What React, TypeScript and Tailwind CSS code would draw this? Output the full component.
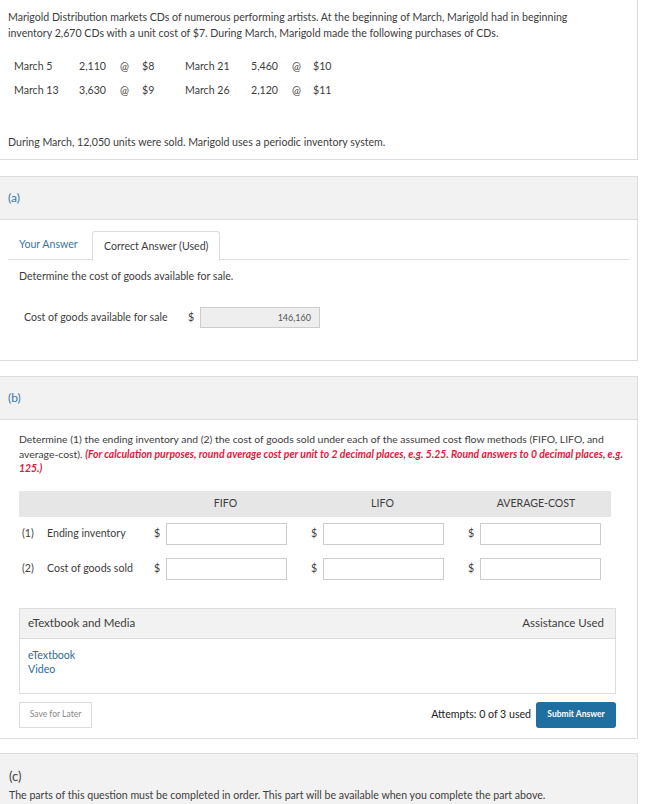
import React from "react";

// ── Data ──────────────────────────────────────────────────────────────────────

const PURCHASES = [
  ["March 5", "2,110", "$8", "March 21", "5,460", "$10"],
  ["March 13", "3,630", "$9", "March 26", "2,120", "$11"],
];

const METHODS = ["FIFO", "LIFO", "AVERAGE-COST"];

const ROWS = [
  ["(1)", "Ending inventory"],
  ["(2)", "Cost of goods sold"],
];

const FONT = { fontFamily: "Lato, 'Open Sans', sans-serif" };

// ── Pieces ────────────────────────────────────────────────────────────────────

function PartHeader({ label }: { label: string }) {
  return (
    <div className="h-[43px] bg-[#f2f2f2] border-b border-[#ddd] px-2 flex items-center text-[12px] text-[#3a76a1]">
      {label}
    </div>
  );
}

function AmountCell() {
  return (
    <div className="flex items-center pl-[7px]">
      <span className="w-[6px]">$</span>
      <input className="ml-[6px] w-[121px] h-[22px] border border-[#ccc] bg-white outline-none" />
    </div>
  );
}

// ── App ───────────────────────────────────────────────────────────────────────

export default function App() {
  return (
    <div className="min-h-screen bg-white text-[#3d3d3d] text-[10.6px]" style={FONT}>
      <div className="w-[638px]">
        {/* Énoncé */}
        <div className="border-r border-b border-[#ddd] px-2 pt-[9px] pb-[9px]">
          <p className="leading-4 whitespace-nowrap">
            Marigold Distribution markets CDs of numerous performing artists. At the beginning of March, Marigold had in beginning
            <br />
            inventory 2,670 CDs with a unit cost of $7. During March, Marigold made the following purchases of CDs.
          </p>
          <div className="mt-[14px] pl-[6px]">
            {PURCHASES.map((r) => (
              <div key={r[0]} className="h-6 flex items-center">
                <span className="w-[65px]">{r[0]}</span>
                <span className="w-[41px]">{r[1]}</span>
                <span className="w-[22px]">@</span>
                <span className="w-[43px]">{r[2]}</span>
                <span className="w-[66px]">{r[3]}</span>
                <span className="w-[41px]">{r[4]}</span>
                <span className="w-[21px]">@</span>
                <span>{r[5]}</span>
              </div>
            ))}
          </div>
          <p className="mt-[31px] leading-4">
            During March, 12,050 units were sold. Marigold uses a periodic inventory system.
          </p>
        </div>

        {/* (a) */}
        <div className="mt-4 border border-l-0 border-[#ddd]">
          <PartHeader label="(a)" />
          <div className="px-2 pt-[11px] pb-[32px]">
            <div className="flex h-[29px] border-b border-[#ddd]">
              <div className="w-[84px] pl-[11px] flex items-center text-[#3a76a1]">Your Answer</div>
              <div className="w-[128px] pl-[11px] flex items-center border border-b-0 border-[#ddd] rounded-t-[3px] bg-white mb-[-1px] h-[30px]">
                Correct Answer (Used)
              </div>
            </div>
            <p className="mt-[8px] pl-[11px] leading-4">Determine the cost of goods available for sale.</p>
            <div className="mt-[23px] pl-[16px] flex items-center">
              <span className="w-[164px]">Cost of goods available for sale</span>
              <span className="w-[6px]">$</span>
              <div className="ml-[6px] w-[120px] h-[21px] bg-[#eee] border border-[#ccc] flex items-center justify-end pr-2 text-[9px] text-[#555]">
                146,160
              </div>
            </div>
          </div>
        </div>

        {/* (b) */}
        <div className="mt-[15px] border border-l-0 border-[#ddd]">
          <PartHeader label="(b)" />
          <div className="px-2 pt-[12px] pb-[10px]">
            <div className="pl-[11px] pr-[13px]">
              <p className="leading-[14.5px] whitespace-nowrap text-[10.4px]">
                Determine (1) the ending inventory and (2) the cost of goods sold under each of the assumed cost flow methods (FIFO, LIFO, and
                <br />
                average-cost).{" "}
                <span className="italic font-bold text-[#e3173d]">
                  (For calculation purposes, round average cost per unit to 2 decimal places, e.g. 5.25. Round answers to 0 decimal places, e.g.
                  <br />
                  125.)
                </span>
              </p>

              <div className="mt-[15px] w-[592px]">
                <div className="grid grid-cols-[128px_157px_157px_150px] h-[26px] bg-[#e6e6e6] items-center">
                  <span />
                  {METHODS.map((m) => (
                    <span key={m} className="text-center">
                      {m}
                    </span>
                  ))}
                </div>
                {ROWS.map(([n, label]) => (
                  <div key={n} className="grid grid-cols-[128px_157px_157px_150px] h-[35px] items-center">
                    <div className="flex pl-[3px]">
                      <span className="w-[25px]">{n}</span>
                      <span>{label}</span>
                    </div>
                    <AmountCell />
                    <AmountCell />
                    <AmountCell />
                  </div>
                ))}
              </div>

              <div className="mt-[21px] border border-[#ddd]">
                <div className="h-[30px] bg-[#f2f2f2] border-b border-[#ddd] flex items-center justify-between pl-2 pr-[11px] text-[11.5px]">
                  <span>eTextbook and Media</span>
                  <span>Assistance Used</span>
                </div>
                <div className="pt-[9px] pb-[17px] pl-2 leading-[14px] text-[#2f6c97]">
                  <div>eTextbook</div>
                  <div>Video</div>
                </div>
              </div>

              <div className="mt-2 flex items-center justify-between">
                <button className="w-[73px] h-[26px] border border-[#ddd] bg-white text-[8.5px] text-[#888]">
                  Save for Later
                </button>
                <div className="flex items-center">
                  <span className="text-[#222]">Attempts: 0 of 3 used</span>
                  <button className="ml-[5px] w-[80px] h-[26px] rounded-[3px] bg-[#1f6fa1] text-white text-[8.5px] font-bold">
                    Submit Answer
                  </button>
                </div>
              </div>
            </div>
          </div>
        </div>

        {/* (c) */}
        <div className="mt-[14px] border border-l-0 border-[#ddd] bg-[#f2f2f2] px-[9px] pt-[12px] pb-4">
          <div className="text-[13px] leading-5 text-[#444]">(c)</div>
          <p className="mt-[1px] leading-4">
            The parts of this question must be completed in order. This part will be available when you complete the part above.
          </p>
        </div>
      </div>
    </div>
  );
}
